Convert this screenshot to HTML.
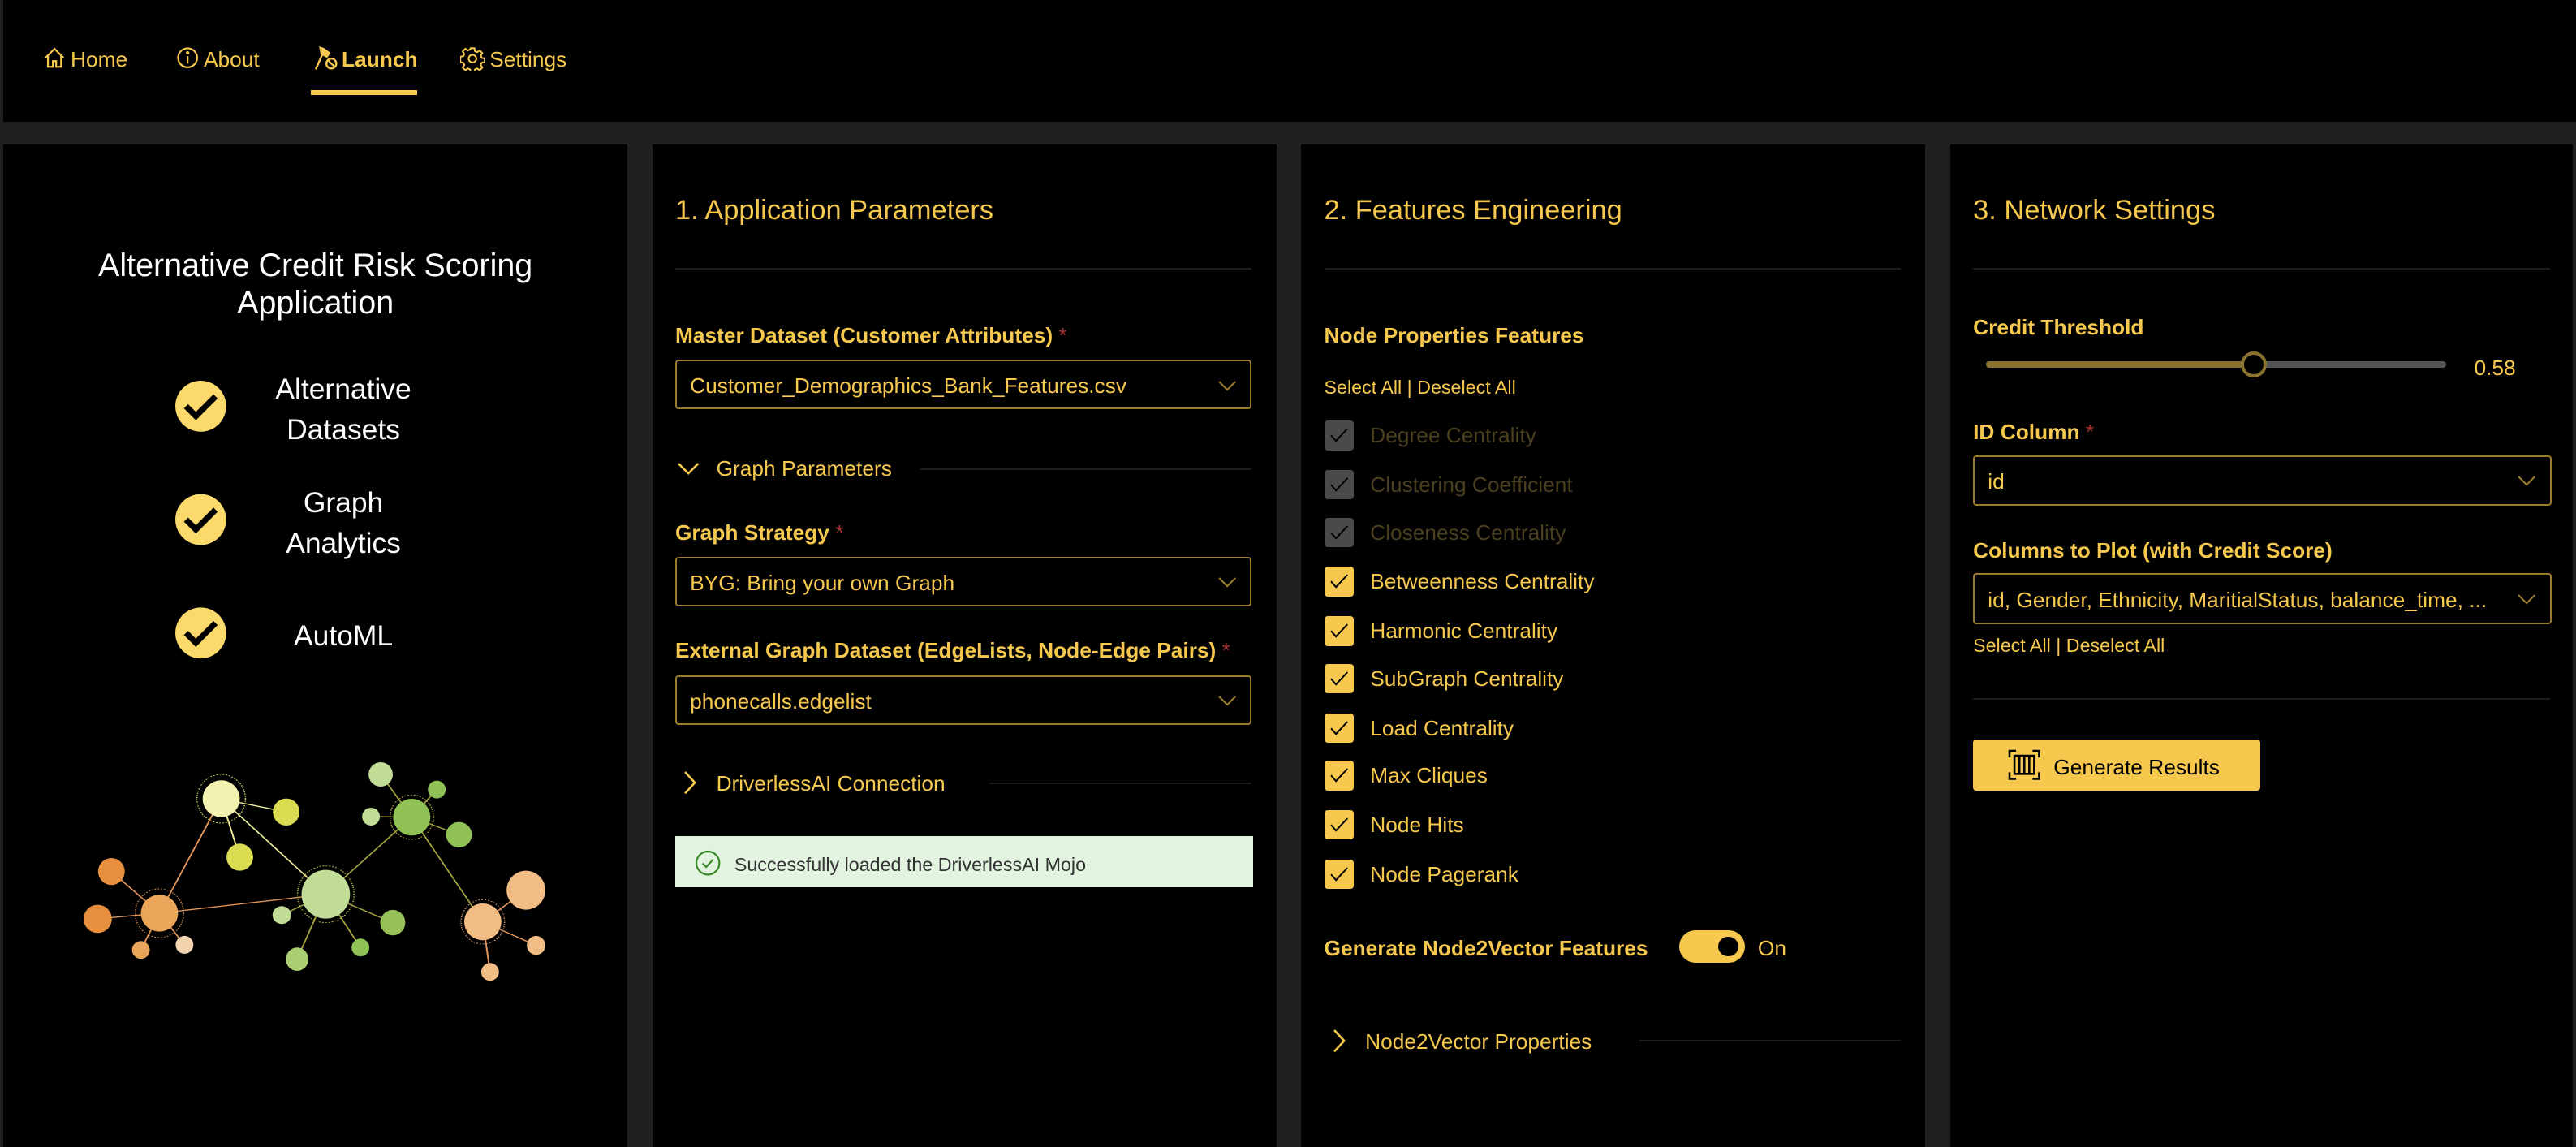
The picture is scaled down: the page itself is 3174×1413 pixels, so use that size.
<!DOCTYPE html>
<html><head><meta charset="utf-8"><style>
html{zoom:2.02423}
body{margin:0;width:1568px;height:691px;background:#1f2021;position:relative;overflow:hidden;font-family:"Liberation Sans",sans-serif;color:#f6c94e}
.a{position:absolute;white-space:nowrap}
.p{position:absolute;top:88px;height:610px;background:#000}
.t{position:absolute;white-space:nowrap;line-height:18px;height:18px;margin-top:1px}
.h{font-size:17px}
.b{font-size:13px;font-weight:bold}
.s{font-size:11.5px}
.n{font-size:13px}
.hr{position:absolute;height:1px;background:#1e1e1e}
.dd{position:absolute;height:28px;border:1px solid #9a7c2c;border-radius:2px;box-sizing:border-box;width:352px}
.dd span{position:absolute;left:8px;top:6px;font-size:13px;line-height:18px}
.dd svg{position:absolute;right:8px;top:9px}
.req{color:#a33;font-weight:normal}
.cb{position:absolute;left:806px;width:18px;height:18px;border-radius:2px;background:#f6c94e}
.cb.d{background:#4a4a4a}
.cb svg{position:absolute;left:3px;top:4px}
.lt{font-size:13px;left:834px}
.lt.d{color:#4a3f1e}
</style></head><body>
<div class="a" style="left:2px;top:0;width:1566px;height:74px;background:#000"></div>
<!-- nav -->
<svg class="a" style="left:26px;top:28px" width="14" height="14" viewBox="0 0 14 14" fill="none" stroke="#f6c94e" stroke-width="1.1"><path d="M1.5 7 L7 1.5 L12.5 7 M3 5.5 V12.5 H6 V9 H8 V12.5 H11 V5.5"/></svg>
<div class="t n" style="left:43px;top:26px;font-size:13px">Home</div>
<svg class="a" style="left:107px;top:28px" width="14" height="14" viewBox="0 0 14 14" fill="none" stroke="#f6c94e" stroke-width="1.1"><circle cx="7" cy="7" r="5.8"/><path d="M7 6 V10.5"/><circle cx="7" cy="4" r=".5" fill="#f6c94e"/></svg>
<div class="t n" style="left:124px;top:26px;font-size:13px">About</div>
<svg class="a" style="left:191px;top:27px" width="15" height="16" viewBox="0 0 15 16"><path d="M3 1 L6 2 L10 5 L8 8 L4 6 Z" fill="#f6c94e"/><path d="M5 6 L1 15" stroke="#f6c94e" stroke-width="1.2"/><circle cx="10.5" cy="11.5" r="3" fill="none" stroke="#f6c94e" stroke-width="1.2"/><path d="M8.5 9.5 L12.5 13.5" stroke="#f6c94e" stroke-width="1.1"/></svg>
<div class="t" style="left:208px;top:26px;font-size:13px;font-weight:bold">Launch</div>
<div class="a" style="left:189px;top:55px;width:65px;height:3px;background:#f6c94e"></div>
<svg class="a" style="left:280px;top:28px" width="15" height="15" viewBox="0 0 16 16" fill="none" stroke="#f6c94e" stroke-width="1.1"><circle cx="8" cy="8" r="2.5"/><path d="M6.8 1.2h2.4l.4 2 1.4.6 1.7-1.1 1.7 1.7-1.1 1.7.6 1.4 2 .4v2.4l-2 .4-.6 1.4 1.1 1.7-1.7 1.7-1.7-1.1-1.4.6-.4 2H6.8l-.4-2-1.4-.6-1.7 1.1-1.7-1.7 1.1-1.7-.6-1.4-2-.4V6.8l2-.4.6-1.4-1.1-1.7 1.7-1.7 1.7 1.1 1.4-.6z"/></svg>
<div class="t n" style="left:298px;top:26px;font-size:13px">Settings</div>

<div class="p" style="left:2px;width:380px"></div>
<div class="p" style="left:397px;width:380px"></div>
<div class="p" style="left:792px;width:380px"></div>
<div class="p" style="left:1187px;width:379px"></div>

<!-- left panel -->
<div class="a" style="left:2px;width:380px;top:150px;text-align:center;color:#fff;font-size:19.5px;line-height:23px;font-weight:300">Alternative Credit Risk Scoring<br>Application</div>
<svg class="a" style="left:106px;top:231px" width="32" height="170" viewBox="0 0 32 170">
<g fill="#fbd96a"><circle cx="16" cy="16" r="15.5"/><circle cx="16" cy="85" r="15.5"/><circle cx="16" cy="154" r="15.5"/></g>
<g fill="none" stroke="#000" stroke-width="3.6"><path d="M7 16 L13 22 L25 10"/><path d="M7 85 L13 91 L25 79"/><path d="M7 154 L13 160 L25 148"/></g></svg>
<div class="a" style="left:150px;width:118px;top:225px;text-align:center;color:#fff;font-size:17.5px;line-height:24.5px">Alternative<br>Datasets</div>
<div class="a" style="left:150px;width:118px;top:294px;text-align:center;color:#fff;font-size:17.5px;line-height:24.5px">Graph<br>Analytics</div>
<div class="a" style="left:150px;width:118px;top:375px;text-align:center;color:#fff;font-size:17.5px;line-height:24.5px">AutoML</div>
<svg class="a" style="left:0;top:434.7px" width="385.3" height="177.8" viewBox="0 0 1568 1080" preserveAspectRatio="none">
<g stroke-width="4" fill="none">
<path d="M548 312 L709 361 M548 312 L594 528 M548 312 L807 665" stroke="#eded9a"/>
<path d="M548 312 L395 735 M395 735 L807 665 M395 735 L276 581 M395 735 L242 756 M395 735 L349 871 M395 735 L457 852" stroke="#e4965a"/>
<path d="M807 665 L1020 380 M807 665 L698 742 M807 665 L736 905 M807 665 L893 862 M807 665 L973 770 M1020 380 L943 222 M1020 380 L1082 278 M1020 380 L919 378 M1020 380 L1137 445 M1020 380 L1196 767" stroke="#a4a33e"/>
<path d="M1196 767 L1303 650 M1196 767 L1328 854 M1196 767 L1214 952" stroke="#e4965a"/>
</g>
<g fill="none" stroke-width="3" stroke-dasharray="4 4">
<ellipse cx="548" cy="312" rx="60" ry="90" stroke="#c8c858"/>
<ellipse cx="395" cy="735" rx="60" ry="90" stroke="#c0844a"/>
<ellipse cx="807" cy="665" rx="70" ry="105" stroke="#b5b648"/>
<ellipse cx="1020" cy="380" rx="54" ry="82" stroke="#a4a33e"/>
<ellipse cx="1196" cy="767" rx="54" ry="82" stroke="#c09070"/>
</g>
<ellipse cx="548" cy="312" rx="46" ry="68" fill="#f2f2b0"/>
<ellipse cx="709" cy="361" rx="33" ry="50" fill="#d9dc50"/>
<ellipse cx="594" cy="528" rx="33" ry="50" fill="#d9dc50"/>
<ellipse cx="395" cy="735" rx="46" ry="68" fill="#eba55b"/>
<ellipse cx="276" cy="581" rx="33" ry="50" fill="#e88f3e"/>
<ellipse cx="242" cy="756" rx="35" ry="52" fill="#e88f3e"/>
<ellipse cx="349" cy="871" rx="22" ry="33" fill="#eba55b"/>
<ellipse cx="457" cy="852" rx="22" ry="33" fill="#f3d3ad"/>
<ellipse cx="807" cy="665" rx="60" ry="90" fill="#c1dc97"/>
<ellipse cx="698" cy="742" rx="23" ry="33" fill="#c1dc97"/>
<ellipse cx="736" cy="905" rx="28" ry="43" fill="#a9cf72"/>
<ellipse cx="893" cy="862" rx="22" ry="33" fill="#8fc154"/>
<ellipse cx="973" cy="770" rx="31" ry="47" fill="#97c156"/>
<ellipse cx="1020" cy="380" rx="46" ry="68" fill="#8fc154"/>
<ellipse cx="943" cy="222" rx="30" ry="45" fill="#c1dc97"/>
<ellipse cx="1082" cy="278" rx="22" ry="33" fill="#8fc154"/>
<ellipse cx="919" cy="378" rx="22" ry="33" fill="#c1dc97"/>
<ellipse cx="1137" cy="445" rx="32" ry="47" fill="#8fc154"/>
<ellipse cx="1196" cy="767" rx="46" ry="68" fill="#f2bc85"/>
<ellipse cx="1303" cy="650" rx="48" ry="72" fill="#f2bc85"/>
<ellipse cx="1328" cy="854" rx="23" ry="35" fill="#f2bc85"/>
<ellipse cx="1214" cy="952" rx="22" ry="33" fill="#f2bc85"/>
</svg>

<!-- panel 2 -->
<div class="t h" style="left:411px;top:118px">1. Application Parameters</div>
<div class="hr" style="left:411px;width:351px;top:163px"></div>
<div class="t b" style="left:411px;top:194px">Master Dataset (Customer Attributes) <span class="req">*</span></div>
<div class="dd" style="left:411px;top:219px;width:351px;height:30px"><span>Customer_Demographics_Bank_Features.csv</span><svg width="12" height="8" viewBox="0 0 12 8" style="top:11px"><path d="M1 1 L6 6 L11 1" fill="none" stroke="#9a7c2c" stroke-width="1"/></svg></div>
<svg class="a" style="left:412px;top:280px" width="14" height="10" viewBox="0 0 14 10"><path d="M1 2 L7 8 L13 2" fill="none" stroke="#f6c94e" stroke-width="1.3"/></svg>
<div class="t n" style="left:436px;top:275px">Graph Parameters</div>
<div class="hr" style="left:560px;width:202px;top:285px"></div>
<div class="t b" style="left:411px;top:314px">Graph Strategy <span class="req">*</span></div>
<div class="dd" style="left:411px;top:339px;width:351px;height:30px"><span>BYG: Bring your own Graph</span><svg width="12" height="8" viewBox="0 0 12 8" style="top:11px"><path d="M1 1 L6 6 L11 1" fill="none" stroke="#9a7c2c" stroke-width="1"/></svg></div>
<div class="t b" style="left:411px;top:386px">External Graph Dataset (EdgeLists, Node-Edge Pairs) <span class="req">*</span></div>
<div class="dd" style="left:411px;top:411px;width:351px;height:30px"><span>phonecalls.edgelist</span><svg width="12" height="8" viewBox="0 0 12 8" style="top:11px"><path d="M1 1 L6 6 L11 1" fill="none" stroke="#9a7c2c" stroke-width="1"/></svg></div>
<svg class="a" style="left:415px;top:469px" width="10" height="15" viewBox="0 0 10 15"><path d="M2 1 L8 7.5 L2 14" fill="none" stroke="#f6c94e" stroke-width="1.3"/></svg>
<div class="t n" style="left:436px;top:467px">DriverlessAI Connection</div>
<div class="hr" style="left:602px;width:160px;top:476px"></div>
<div class="a" style="left:411px;top:509px;width:352px;height:31px;background:#e2f4e0"></div>
<svg class="a" style="left:423px;top:517px" width="16" height="16" viewBox="0 0 16 16"><circle cx="8" cy="8" r="7" fill="none" stroke="#3a8a2a" stroke-width="1.1"/><path d="M4.8 8.2 L7 10.4 L11.2 5.8" fill="none" stroke="#3a8a2a" stroke-width="1.1"/></svg>
<div class="t s" style="left:447px;top:516px;color:#333">Successfully loaded the DriverlessAI Mojo</div>

<!-- panel 3 -->
<div class="t h" style="left:806px;top:118px">2. Features Engineering</div>
<div class="hr" style="left:806px;width:351px;top:163px"></div>
<div class="t b" style="left:806px;top:194px">Node Properties Features</div>
<div class="t s" style="left:806px;top:226px">Select All | Deselect All</div>

<div class="cb d" style="top:256px"><svg width="12" height="10" viewBox="0 0 12 10"><path d="M1 5 L4 8.5 L11 1" fill="none" stroke="#000" stroke-width="1"/></svg></div><div class="t lt d" style="top:255px">Degree Centrality</div>
<div class="cb d" style="top:286px"><svg width="12" height="10" viewBox="0 0 12 10"><path d="M1 5 L4 8.5 L11 1" fill="none" stroke="#000" stroke-width="1"/></svg></div><div class="t lt d" style="top:285px">Clustering Coefficient</div>
<div class="cb d" style="top:315px"><svg width="12" height="10" viewBox="0 0 12 10"><path d="M1 5 L4 8.5 L11 1" fill="none" stroke="#000" stroke-width="1"/></svg></div><div class="t lt d" style="top:314px">Closeness Centrality</div>
<div class="cb" style="top:345px"><svg width="12" height="10" viewBox="0 0 12 10"><path d="M1 5 L4 8.5 L11 1" fill="none" stroke="#000" stroke-width="1"/></svg></div><div class="t lt" style="top:344px">Betweenness Centrality</div>
<div class="cb" style="top:375px"><svg width="12" height="10" viewBox="0 0 12 10"><path d="M1 5 L4 8.5 L11 1" fill="none" stroke="#000" stroke-width="1"/></svg></div><div class="t lt" style="top:374px">Harmonic Centrality</div>
<div class="cb" style="top:404px"><svg width="12" height="10" viewBox="0 0 12 10"><path d="M1 5 L4 8.5 L11 1" fill="none" stroke="#000" stroke-width="1"/></svg></div><div class="t lt" style="top:403px">SubGraph Centrality</div>
<div class="cb" style="top:434px"><svg width="12" height="10" viewBox="0 0 12 10"><path d="M1 5 L4 8.5 L11 1" fill="none" stroke="#000" stroke-width="1"/></svg></div><div class="t lt" style="top:433px">Load Centrality</div>
<div class="cb" style="top:463px"><svg width="12" height="10" viewBox="0 0 12 10"><path d="M1 5 L4 8.5 L11 1" fill="none" stroke="#000" stroke-width="1"/></svg></div><div class="t lt" style="top:462px">Max Cliques</div>
<div class="cb" style="top:493px"><svg width="12" height="10" viewBox="0 0 12 10"><path d="M1 5 L4 8.5 L11 1" fill="none" stroke="#000" stroke-width="1"/></svg></div><div class="t lt" style="top:492px">Node Hits</div>
<div class="cb" style="top:523px"><svg width="12" height="10" viewBox="0 0 12 10"><path d="M1 5 L4 8.5 L11 1" fill="none" stroke="#000" stroke-width="1"/></svg></div><div class="t lt" style="top:522px">Node Pagerank</div>

<div class="t b" style="left:806px;top:567px">Generate Node2Vector Features</div>
<div class="a" style="left:1022px;top:566px;width:40px;height:20px;border-radius:10px;background:#f6c94e"></div>
<div class="a" style="left:1046px;top:570px;width:12px;height:12px;border-radius:6px;background:#000"></div>
<div class="t n" style="left:1070px;top:567px">On</div>
<svg class="a" style="left:810px;top:626px" width="10" height="15" viewBox="0 0 10 15"><path d="M2 1 L8 7.5 L2 14" fill="none" stroke="#f6c94e" stroke-width="1.3"/></svg>
<div class="t n" style="left:831px;top:624px">Node2Vector Properties</div>
<div class="hr" style="left:998px;width:159px;top:633px"></div>

<!-- panel 4 -->
<div class="t h" style="left:1201px;top:118px">3. Network Settings</div>
<div class="hr" style="left:1201px;width:351px;top:163px"></div>
<div class="t b" style="left:1201px;top:189px">Credit Threshold</div>
<div class="a" style="left:1209px;top:220px;width:280px;height:4px;border-radius:2px;background:#555"></div>
<div class="a" style="left:1209px;top:220px;width:163px;height:4px;border-radius:2px;background:#8a7330"></div>
<div class="a" style="left:1364px;top:214px;width:12px;height:12px;border-radius:8px;border:2px solid #8a7330;background:#000"></div>
<div class="t n" style="left:1506px;top:214px">0.58</div>
<div class="t b" style="left:1201px;top:253px">ID Column <span class="req">*</span></div>
<div class="dd" style="left:1201px;top:277px;width:352px;height:31px"><span style="top:6px">id</span><svg width="12" height="8" viewBox="0 0 12 8" style="top:11px"><path d="M1 1 L6 6 L11 1" fill="none" stroke="#9a7c2c" stroke-width="1"/></svg></div>
<div class="t b" style="left:1201px;top:325px">Columns to Plot (with Credit Score)</div>
<div class="dd" style="left:1201px;top:349px;width:352px;height:31px"><span style="top:6px">id, Gender, Ethnicity, MaritialStatus, balance_time, ...</span><svg width="12" height="8" viewBox="0 0 12 8" style="top:11px"><path d="M1 1 L6 6 L11 1" fill="none" stroke="#9a7c2c" stroke-width="1"/></svg></div>
<div class="t s" style="left:1201px;top:383px">Select All | Deselect All</div>
<div class="hr" style="left:1201px;width:351px;top:425px"></div>
<div class="a" style="left:1201px;top:450px;width:175px;height:31px;border-radius:2px;background:#f6c94e"></div>
<svg class="a" style="left:1222px;top:456px" width="20" height="19" viewBox="0 0 20 19" fill="none" stroke="#000" stroke-width="1.3"><path d="M1 5 V1 H5 M15 1 H19 V5 M19 14 V18 H15 M5 18 H1 V14"/><path d="M4 4 H16 V15 H4 Z M7 4 V15 M10 4 V15 M13 4 V15"/></svg>
<div class="t" style="left:1250px;top:457px;font-size:13px;color:#000">Generate Results</div>
</body></html>
